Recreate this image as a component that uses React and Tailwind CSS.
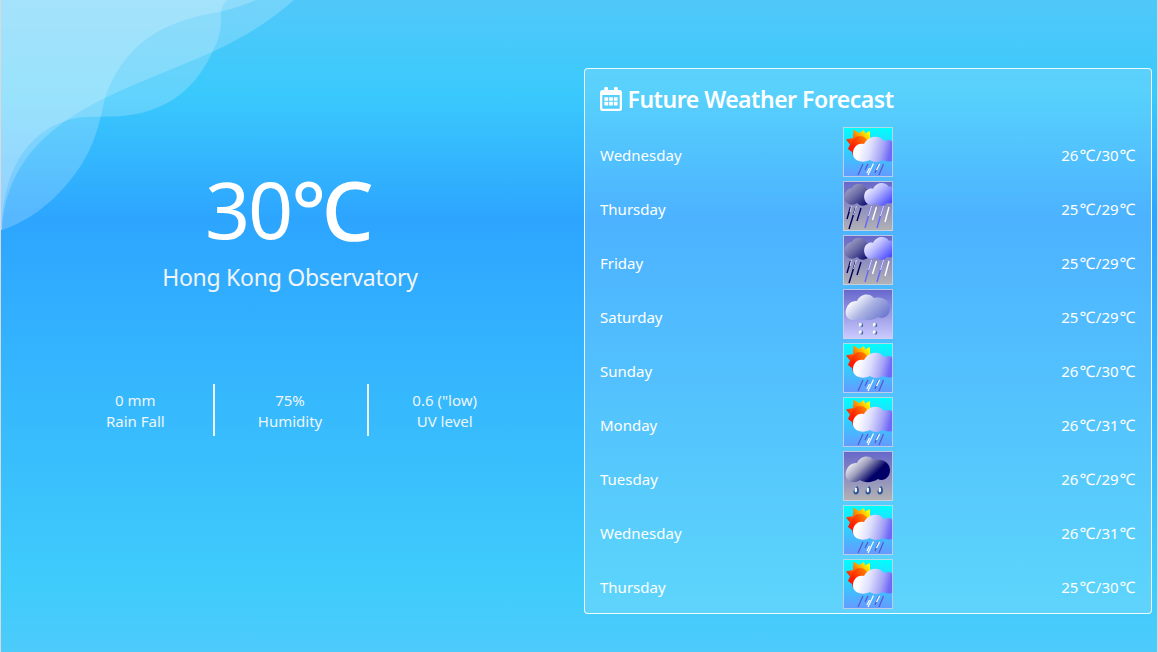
import React from "react";

const days = [
  ["Wednesday", "sun", 26, 30],
  ["Thursday", "heavy", 25, 29],
  ["Friday", "heavy", 25, 29],
  ["Saturday", "light", 25, 29],
  ["Sunday", "sun", 26, 30],
  ["Monday", "sun", 26, 31],
  ["Tuesday", "rain", 26, 29],
  ["Wednesday", "sun", 26, 31],
  ["Thursday", "sun", 25, 30],
];

function Defs() {
  return (
    <svg className="absolute h-0 w-0" aria-hidden="true">
      <defs>
        <linearGradient id="sky" x1="0" y1="0" x2="0" y2="1">
          <stop offset="0" stopColor="#00ffff" />
          <stop offset="1" stopColor="#6699ff" />
        </linearGradient>
        <linearGradient id="dusk" x1="0" y1="0" x2="0" y2="1">
          <stop offset="0" stopColor="#6666cc" />
          <stop offset="1" stopColor="#b3b3b3" />
        </linearGradient>
        <linearGradient id="lilac" x1="0" y1="0" x2="0" y2="1">
          <stop offset="0" stopColor="#6666cc" />
          <stop offset="1" stopColor="#ccccff" />
        </linearGradient>
        <linearGradient id="rays" x1="0" y1=".7" x2="1" y2="0">
          <stop offset=".1" stopColor="#ff1500" />
          <stop offset=".5" stopColor="#ff9500" />
          <stop offset=".8" stopColor="#ffff00" />
        </linearGradient>
        <linearGradient id="disc" x1="0" y1=".6" x2="1" y2="0">
          <stop offset="0" stopColor="#ff1500" />
          <stop offset="1" stopColor="#ff9a00" />
        </linearGradient>
        <linearGradient id="paleCloud" x1="0" y1="0" x2="1" y2=".15">
          <stop offset=".2" stopColor="#ffffff" />
          <stop offset=".5" stopColor="#dcdcfd" />
          <stop offset=".8" stopColor="#a4a2f6" />
          <stop offset="1" stopColor="#7068f8" />
        </linearGradient>
        <linearGradient id="backCloud" x1="0" y1="0" x2="1" y2=".9">
          <stop offset="0" stopColor="#b8b8d4" />
          <stop offset=".5" stopColor="#6868a4" />
          <stop offset="1" stopColor="#000066" />
        </linearGradient>
        <linearGradient id="frontCloud" x1="0" y1="0" x2="1" y2=".8">
          <stop offset=".1" stopColor="#ffffff" />
          <stop offset=".5" stopColor="#b4b4ff" />
          <stop offset="1" stopColor="#4444ff" />
        </linearGradient>
        <linearGradient id="mildCloud" x1="0" y1=".1" x2="1" y2=".7">
          <stop offset=".15" stopColor="#ffffff" />
          <stop offset=".55" stopColor="#aab2e2" />
          <stop offset="1" stopColor="#6c78cf" />
        </linearGradient>
        <linearGradient id="darkCloud" x1="0" y1=".1" x2="1" y2=".7">
          <stop offset=".1" stopColor="#ffffff" />
          <stop offset=".42" stopColor="#9c9cbd" />
          <stop offset=".75" stopColor="#000066" />
        </linearGradient>
        <linearGradient id="drop" x1="0" y1="0" x2="1" y2=".3">
          <stop offset=".3" stopColor="#ffffff" />
          <stop offset="1" stopColor="#24559b" />
        </linearGradient>
      </defs>
    </svg>
  );
}

const CLOUD =
  "M9 31C3 30 1 24 4 18C6 14 9 12 14 12C17 5 26 3 31 9C38 7 47 11 47 19C47 27 40 31 35 28C29 32 21 32 17 29C14 31 12 31 9 31Z";

function WeatherIcon({ kind }) {
  const sky = { sun: "url(#sky)", heavy: "url(#dusk)", light: "url(#lilac)", rain: "url(#dusk)" }[kind];
  return (
    <svg className="block size-[50px]" viewBox="0 0 50 50">
      <rect width="50" height="50" fill={sky} />
      {kind === "sun" && (
        <>
          <path d="M10.500 2.500L16 6L21 3L22 6.500L27 4L27 10L31 14L22 25L10 29L9 25L5 22L7 17.500L3 12.500L10 11Z" fill="url(#rays)" />
          <circle cx="17" cy="17.500" r="8.500" fill="url(#disc)" />
          <path d="M16 34C10 33 8 25 12 20C14 17 18 16 21 17C26 8 37 8 41 14C45 12 48 13 50 15V34C45 35 42 34 40 33C35 36 29 35 27 33C23 35 19 35 16 34Z" fill="url(#paleCloud)" />
          <g fill="none" strokeWidth="1.200">
            <path d="M20 37L15 48M25 37L22 43M35.500 37L32 46M40.500 37L36 48" stroke="#5c54c8" />
            <path d="M30.500 36.500L25 48M26.500 41L24 46M36.500 37L33.500 43" stroke="#fff" />
          </g>
        </>
      )}
      {kind === "heavy" && (
        <>
          <path d="M6 23C1 21 0 15 3 11C5 8 7 7 9 7C12 1 21 2 23 7L29 12L26 22C21 26 17 25 14 22C11 24 9 24 6 23Z" fill="url(#backCloud)" />
          <path d="M25 23C20 20 20 12 24 9C26 8 28 7 30 8C34 0 43 1 46 6C48 5 49 6 50 8V21C48 23 46 22 44 22C41 26 36 26 33 22C31 24 28 24 25 23Z" fill="url(#frontCloud)" />
          <g fill="none" strokeWidth="1.400">
            <path d="M7.500 26L4 38M12.500 27L6 48M18 27L14 40" stroke="#00005c" />
            <path d="M8.500 25L7 31M13.500 25L10.500 34" stroke="#d4d4e8" strokeWidth="1" />
            <path d="M28 26L22 47M40 26L34 47" stroke="#6666ff" />
            <path d="M33.500 26L29.500 39M46 26L42 41" stroke="#fff" />
            <path d="M28.500 25L25.500 35M40.500 25L37.500 35" stroke="#e0e0ff" strokeWidth="1" />
          </g>
        </>
      )}
      {kind === "light" && (
        <>
          <path d={CLOUD} fill="url(#mildCloud)" />
          {[[18, 36], [32, 36], [18, 43.500], [32, 43.500]].map(([x, y]) => (
            <g key={x + "-" + y}>
              <circle cx={x} cy={y} r="2.200" fill="url(#drop)" />
              <circle cx={x - 0.6} cy={y - 0.6} r="1.200" fill="#fff" />
            </g>
          ))}
        </>
      )}
      {kind === "rain" && (
        <>
          <path d={CLOUD} fill="url(#darkCloud)" />
          {[13, 25, 37].map((x) => (
            <g key={x}>
              <path d={`M${x + 1.5} 35C${x + 4} 39 ${x + 3} 43.500 ${x} 43.500C${x - 4} 43.500 ${x - 3} 37 ${x + 1.5} 35Z`} fill="#2c5596" />
              <ellipse cx={x - 0.2} cy="39" rx="1.300" ry="2.400" fill="#f4f8ff" />
            </g>
          ))}
        </>
      )}
      <rect x=".5" y=".5" width="49" height="49" fill="none" stroke="#ccd5e4" strokeOpacity=".85" />
    </svg>
  );
}

function CalendarIcon() {
  return (
    <svg className="h-6 w-[22px] shrink-0" viewBox="0 0 22 24" fill="#fff">
      <path fillRule="evenodd" d="M4.300 1Q4.300 0 5.300 0H7Q8 0 8 1V3H14V1Q14 0 15 0H16.700Q17.700 0 17.700 1V3H19.500Q22 3 22 5.500V21.500Q22 24 19.500 24H2.500Q0 24 0 21.500V5.500Q0 3 2.500 3H4.300ZM2.300 8V21.200Q2.300 21.700 2.800 21.700H19.200Q19.700 21.700 19.700 21.200V8Z" />
      {[4.4, 9.1, 13.8].map((x) =>
        [10.2, 14.8].map((y) => <rect key={x + "-" + y} x={x} y={y} width="3.800" height="3.600" rx=".5" />)
      )}
    </svg>
  );
}

function Celsius() {
  return <span className="ml-[1px] mr-[0.5px] text-[16px] leading-none">℃</span>;
}

function Stat({ value, label }) {
  return (
    <div className="flex h-[52px] flex-1 flex-col justify-center pr-[2px] pt-[2px] text-center text-[15px] leading-[21px]">
      <span>{value}</span>
      <span>{label}</span>
    </div>
  );
}

export default function App() {
  return (
    <main className="relative flex h-[652px] w-[1158px] overflow-hidden border-x border-[#d9d9dc] bg-[linear-gradient(180deg,#50c8f9_0%,#3ac9fc_14.5%,#2da5ff_33.5%,#3fccfb_90%,#4dcbfb_100%)] font-['Noto_Sans','Open_Sans',sans-serif] text-white">
      <Defs />
      <svg className="absolute left-0 top-0 h-[232px] w-[300px]" viewBox="1 0 300 232" fill="#fff" fillOpacity=".2">
        <path d="M0 0H294C270 21 245 37 212 52C174 69 140 81 105 98C55 123 6 158 2 230H0Z" />
        <path d="M0 0H256C239 7 226 11 213 13C152 24 121 52 105 98C97 137 89 158 68 183C49 206 26 222 2 230H0Z" />
        <path d="M0 0H227C221 7 221 9 221 20C221 32 217 44 211 55C192 94 160 116 110 116.500C90 117 82 116 68 120C29 132 6 166 2 220V230H0Z" />
      </svg>
      <section className="relative flex w-[578px] flex-col items-center pt-[164px]">
        <div className="flex h-[90px] items-center text-[79px] leading-[90px]">
          <span className="-ml-[2px] tracking-[-2px]">30</span>
          <span className="text-[82px] font-medium">℃</span>
        </div>
        <div className="mt-[7px] text-[23px] leading-8 tracking-[-0.28px] text-[#f1f5f8]">Hong Kong Observatory</div>
        <div className="ml-[2px] mt-[91px] flex w-[462px] divide-x-2 divide-[#edf5fa] text-[#edf5fa]">
          <Stat value="0 mm" label="Rain Fall" />
          <Stat value="75%" label="Humidity" />
          <Stat value={'0.6 ("low)'} label="UV level" />
        </div>
      </section>
      <section className="relative ml-[5px] mt-[68px] h-[546px] w-[568px] rounded-[4px] border border-white/90 bg-white/15 px-[15px] pt-[15px]">
        <h1 className="-ml-[0.5px] flex h-[30px] items-center gap-[6px] text-[23px] font-semibold leading-[30px] tracking-[-0.48px]">
          <CalendarIcon />
          <span className="whitespace-nowrap">Future Weather Forecast</span>
        </h1>
        <div className="mt-[13px] flex flex-col gap-1">
          {days.map(([day, kind, low, high], i) => (
            <div key={i} className="grid h-[50px] grid-cols-[1fr_50px_1fr] items-center text-[15px]">
              <span className="pt-[6px]">{day}</span>
              <WeatherIcon kind={kind} />
              <span className="pt-[6px] text-right">
                {low}<Celsius />/{high}<Celsius />
              </span>
            </div>
          ))}
        </div>
      </section>
    </main>
  );
}
